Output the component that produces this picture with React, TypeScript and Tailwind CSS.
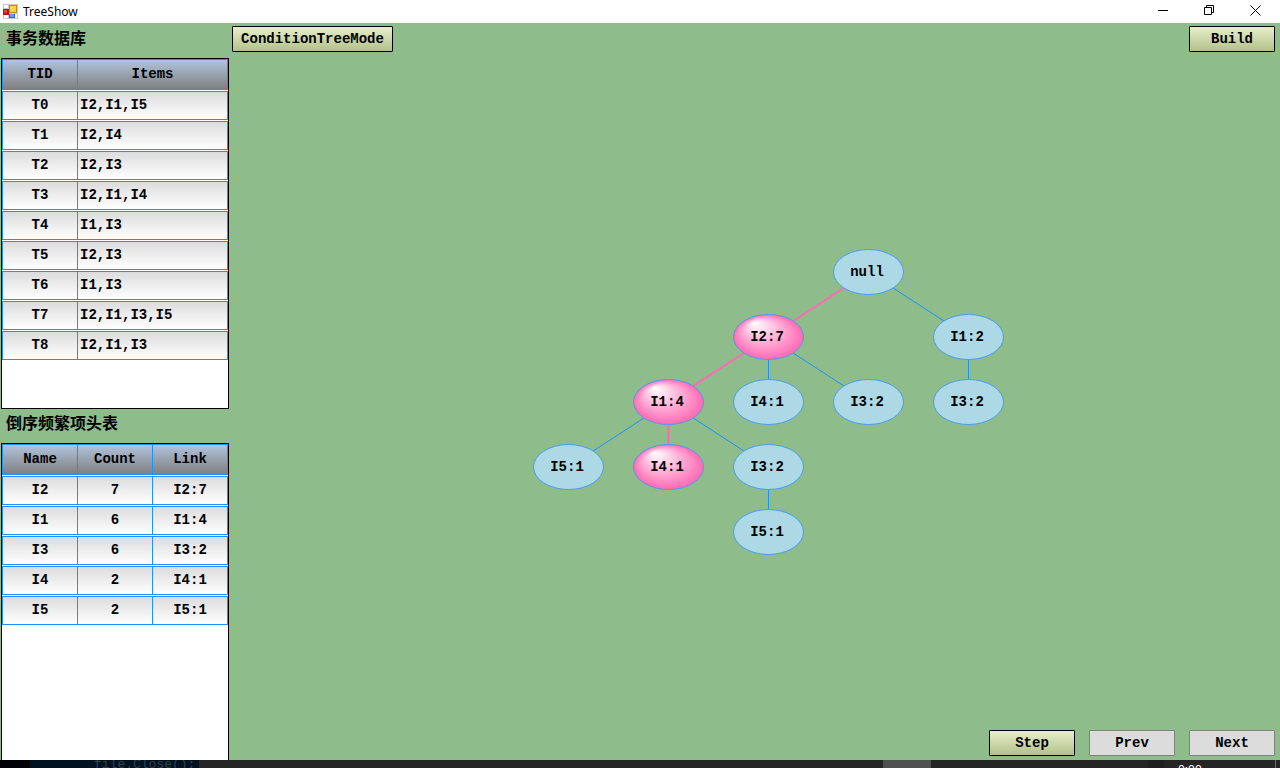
import { useState } from 'react';

const transactions = [
  { tid: 'T0', items: 'I2,I1,I5' },
  { tid: 'T1', items: 'I2,I4' },
  { tid: 'T2', items: 'I2,I3' },
  { tid: 'T3', items: 'I2,I1,I4' },
  { tid: 'T4', items: 'I1,I3' },
  { tid: 'T5', items: 'I2,I3' },
  { tid: 'T6', items: 'I1,I3' },
  { tid: 'T7', items: 'I2,I1,I3,I5' },
  { tid: 'T8', items: 'I2,I1,I3' },
];

const headerTable = [
  { name: 'I2', count: 7, link: 'I2:7' },
  { name: 'I1', count: 6, link: 'I1:4' },
  { name: 'I3', count: 6, link: 'I3:2' },
  { name: 'I4', count: 2, link: 'I4:1' },
  { name: 'I5', count: 2, link: 'I5:1' },
];

type TreeNode = { id: string; label: string; x: number; y: number; parent?: string; active?: boolean };

// FP-tree nodes, positioned on the drawing canvas by centre point
const nodes: TreeNode[] = [
  { id: 'root', label: 'null', x: 335, y: 23, active: true },
  { id: 'a', label: 'I2:7', x: 235, y: 88, parent: 'root', active: true },
  { id: 'b', label: 'I1:2', x: 435, y: 88, parent: 'root' },
  { id: 'c', label: 'I1:4', x: 135, y: 153, parent: 'a', active: true },
  { id: 'd', label: 'I4:1', x: 235, y: 153, parent: 'a' },
  { id: 'e', label: 'I3:2', x: 335, y: 153, parent: 'a' },
  { id: 'f', label: 'I3:2', x: 435, y: 153, parent: 'b' },
  { id: 'g', label: 'I5:1', x: 35, y: 218, parent: 'c' },
  { id: 'h', label: 'I4:1', x: 135, y: 218, parent: 'c', active: true },
  { id: 'i', label: 'I3:2', x: 235, y: 218, parent: 'c' },
  { id: 'j', label: 'I5:1', x: 235, y: 283, parent: 'i' },
];

const mono = "font-['Liberation_Mono','Noto_Sans_CJK_SC',monospace]";
const th =
  'h-[31px] border-y border-l border-[#1e90ff] bg-linear-to-b from-[#b0c4de] to-[#808080] p-0 pb-px text-center font-bold last:border-r';
const td =
  'h-[29px] border-y border-l border-[#1e90ff] bg-linear-to-b from-[#dcdcdc] to-white p-0 pb-px text-center last:border-r';
const table = '-mt-px w-full table-fixed border-separate border-spacing-x-0 border-spacing-y-px text-sm leading-5';

export default function App() {
  return (
    <div className={`flex h-screen flex-col overflow-hidden bg-[#8fbc8b] text-sm font-bold text-black ${mono}`}>
      <TitleBar />
      <div className="flex min-h-0 flex-1">
        <aside className="flex w-[229px] shrink-0 flex-col pl-px">
          <h2 className="h-[35px] shrink-0 px-[5px] pt-[5px] text-base leading-6">事务数据库</h2>
          <div className="h-[351px] shrink-0 border border-black bg-white">
            <table className={table}>
              <thead>
                <tr>
                  <th className={`${th} w-[75px]`}>TID</th>
                  <th className={th}>Items</th>
                </tr>
              </thead>
              <tbody>
                {transactions.map((row) => (
                  <tr key={row.tid}>
                    <td className={td}>{row.tid}</td>
                    <td className={`${td} pl-[2px] text-left`}>{row.items}</td>
                  </tr>
                ))}
              </tbody>
            </table>
          </div>
          <h2 className="h-[34px] shrink-0 px-[5px] pt-[4px] text-base leading-6">倒序频繁项头表</h2>
          <div className="min-h-0 flex-1 border border-b-0 border-black bg-white">
            <table className={table}>
              <thead>
                <tr>
                  <th className={`${th} w-[75px]`}>Name</th>
                  <th className={`${th} w-[75px]`}>Count</th>
                  <th className={th}>Link</th>
                </tr>
              </thead>
              <tbody>
                {headerTable.map((row) => (
                  <tr key={row.name}>
                    <td className={td}>{row.name}</td>
                    <td className={td}>{row.count}</td>
                    <td className={td}>{row.link}</td>
                  </tr>
                ))}
              </tbody>
            </table>
          </div>
        </aside>
        <TreePanel />
      </div>
      <BackgroundStrip />
    </div>
  );
}

function TitleBar() {
  return (
    <header className="flex h-[23px] shrink-0 items-center bg-white font-['Noto_Sans',sans-serif] text-xs font-normal">
      <svg width="15" height="15" viewBox="0 0 15 15" className="ml-[3px]" aria-hidden="true">
        <rect width="15" height="15" fill="#c8c8c8" />
        <rect x="1" y="1" width="4" height="3" fill="#fff" />
        <rect x="1" y="11" width="4" height="3" fill="#fff" />
        <rect x="12" y="10" width="2" height="4" fill="#fff" />
        <rect x="0" y="5" width="6" height="6" fill="#b01818" />
        <rect x="1" y="6" width="3" height="3" fill="#e04030" />
        <rect x="6" y="1" width="8" height="8" fill="#c88a10" />
        <rect x="7" y="2" width="6" height="6" fill="#ffd24a" />
        <rect x="6" y="10" width="6" height="4" fill="#2f62c8" />
        <rect x="7" y="10" width="4" height="3" fill="#6a9cf0" />
      </svg>
      <h1 className="ml-[5px]">TreeShow</h1>
      <div className="ml-auto flex h-full pr-[2px] pb-[2px]">
        <button type="button" aria-label="Minimize" className="flex w-[46px] items-center justify-center">
          <svg width="11" height="11" viewBox="0 0 11 11" stroke="#000">
            <path d="M0 5.5h10" />
          </svg>
        </button>
        <button type="button" aria-label="Restore" className="flex w-[46px] items-center justify-center">
          <svg width="11" height="11" viewBox="0 0 11 11" fill="none" stroke="#000">
            <path d="M.5 2.5h7v7h-7zM2.5 2.5v-2h7v7h-2" />
          </svg>
        </button>
        <button type="button" aria-label="Close" className="flex w-[46px] items-center justify-center">
          <svg width="11" height="11" viewBox="0 0 11 11" stroke="#000">
            <path d="M.5.5l10 10M10.5.5l-10 10" />
          </svg>
        </button>
      </div>
    </header>
  );
}

function PanelButton({
  label,
  wide,
  disabled,
  onClick,
}: {
  label: string;
  wide?: boolean;
  disabled?: boolean;
  onClick?: () => void;
}) {
  return (
    <button
      type="button"
      disabled={disabled}
      onClick={onClick}
      className={`flex h-[26px] items-center justify-center rounded-[1px] border pb-px ${wide ? 'w-[161px]' : 'w-[86px]'} ${
        disabled
          ? 'border-[#808080] bg-[#dcdcdc]'
          : 'border-black bg-linear-to-b from-[#e8eecb] to-[#b3c189]'
      }`}
    >
      {label}
    </button>
  );
}

function TreePanel() {
  const [showPath, setShowPath] = useState(true);

  return (
    <main className="flex min-w-0 flex-1 flex-col pt-[3px] pr-[5px] pb-1 pl-[3px]">
      <div className="flex justify-between">
        <PanelButton label="ConditionTreeMode" wide />
        <PanelButton label="Build" />
      </div>
      <div className="flex flex-1 justify-center pt-[197px] pl-[29px]">
        <TreeCanvas showPath={showPath} />
      </div>
      <div className="flex justify-end gap-[14px]">
        <PanelButton label="Step" onClick={() => setShowPath(!showPath)} />
        <PanelButton label="Prev" disabled />
        <PanelButton label="Next" disabled />
      </div>
    </main>
  );
}

function TreeCanvas({ showPath }: { showPath: boolean }) {
  const byId = (id?: string) => nodes.find((n) => n.id === id);

  return (
    <svg width="471" height="307" viewBox="0 0 471 307" className="shrink-0" role="img" aria-label="FP-tree">
      <defs>
        <radialGradient id="glow" cx="0.5" cy="0.5" r="0.5" fx="0.3" fy="0.18">
          <stop offset="0" stopColor="#fff" />
          <stop offset="1" stopColor="#ff69b4" />
        </radialGradient>
      </defs>
      {nodes.map((n) => {
        const parent = byId(n.parent);
        if (!parent) return null;
        const hot = showPath && n.active;
        return (
          <line
            key={n.id}
            x1={parent.x + 0.5}
            y1={parent.y}
            x2={n.x + 0.5}
            y2={n.y}
            stroke={hot ? '#ff69b4' : '#1e90ff'}
            strokeWidth={hot ? 2 : 1}
          />
        );
      })}
      {nodes.map((n) => (
        <g key={n.id}>
          <ellipse
            cx={n.x + 0.5}
            cy={n.y}
            rx="35"
            ry="22.5"
            fill={showPath && n.active && n.parent ? 'url(#glow)' : '#add8e6'}
            stroke="#4a9cf0"
          />
          <text x={n.x - 1} y={n.y + 4} textAnchor="middle" className="fill-black text-sm font-bold">
            {n.label}
          </text>
        </g>
      ))}
    </svg>
  );
}

// Sliver of the desktop that stays visible under the window
function BackgroundStrip() {
  return (
    <footer className="flex h-2 shrink-0 overflow-hidden bg-[#252526] font-normal" aria-hidden="true">
      <div className="w-[30px] bg-[#000005]" />
      <div className="flex h-2 w-[169px] items-center bg-[#001220] pl-16 text-[13px] leading-none text-[#34414b]">
        file.Close();
      </div>
      <div className="flex-1" />
      <div className="w-12 bg-[#505050]" />
      <div className="w-[217px]" />
      <div className="w-4 bg-[#1e1e1e]" />
      <div className="w-28 border-r border-[#6a6a6a] pt-1 pl-[14px] font-['Noto_Sans',sans-serif] text-xs leading-3 text-white">
        0:00
      </div>
      <div className="w-1" />
    </footer>
  );
}
